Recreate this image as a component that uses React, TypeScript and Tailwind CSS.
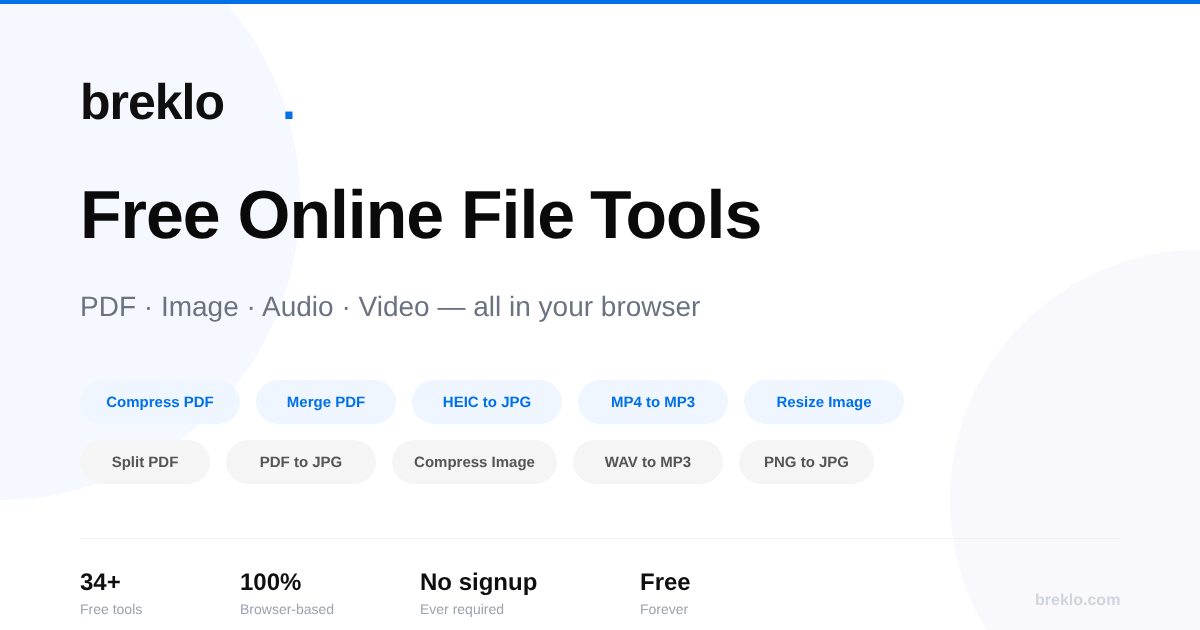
const blue = [
  { t: "Compress PDF", w: "w-[160px]" },
  { t: "Merge PDF", w: "w-[140px]" },
  { t: "HEIC to JPG", w: "w-[150px]" },
  { t: "MP4 to MP3", w: "w-[150px]" },
  { t: "Resize Image", w: "w-[160px]" },
];
const gray = [
  { t: "Split PDF", w: "w-[130px]" },
  { t: "PDF to JPG", w: "w-[150px]" },
  { t: "Compress Image", w: "w-[165px]" },
  { t: "WAV to MP3", w: "w-[150px]" },
  { t: "PNG to JPG", w: "w-[135px]" },
];
const stats = [
  { v: "34+", l: "Free tools", w: "w-[160px]" },
  { v: "100%", l: "Browser-based", w: "w-[180px]" },
  { v: "No signup", l: "Ever required", w: "w-[220px]" },
  { v: "Free", l: "Forever", w: "w-[160px]" },
];

export default function App() {
  return (
    <div className="relative h-[630px] w-[1200px] overflow-hidden bg-white font-['Liberation_Sans',Arial,sans-serif] [text-rendering:geometricPrecision]">
      <div className="absolute left-[-300px] top-[-100px] h-[600px] w-[600px] rounded-full bg-[#f5f9ff]" />
      <div className="absolute left-[950px] top-[250px] h-[500px] w-[500px] rounded-full bg-[#f8f8fd]" />
      <div className="relative flex h-full flex-col [will-change:transform]">
        <div className="h-1 bg-[#0071e9]" />
        <div className="flex flex-col px-20">
          <div className="mt-[68px] flex h-[60px] items-center text-[50px] font-bold leading-[60px] tracking-[-1px] text-[#0f0f0f]">
            <span className="w-[202px]">breklo</span>
            <span className="text-[#0071e9]">.</span>
          </div>
          <h1 className="mt-[40px] h-[86px] text-[68px] font-bold leading-[86px] tracking-[-1px] text-[#0a0a0a]">
            Free Online File <span className="ml-[-2px]">Tools</span>
          </h1>
          <p className="mt-[31px] h-[36px] text-[28px] leading-[36px] text-[#6b7280]">
            PDF · Image · Audio · Video — all in your browser
          </p>
          <div className="mt-[55px] flex gap-4">
            {blue.map((c) => (
              <div key={c.t} className={`flex h-11 items-center justify-center rounded-full bg-[#eff6ff] pt-[3px] text-[15px] font-bold text-[#0071e9] ${c.w}`}>
                {c.t}
              </div>
            ))}
          </div>
          <div className="mt-4 flex gap-4">
            {gray.map((c) => (
              <div key={c.t} className={`flex h-11 items-center justify-center rounded-full bg-[#f5f5f5] pt-[3px] text-[15px] font-bold text-[#555555] ${c.w}`}>
                {c.t}
              </div>
            ))}
          </div>
          <div className="mt-[54px] h-px bg-[#f2f2f4]" />
          <div className="mt-[29px] flex">
            {stats.map((s) => (
              <div key={s.v} className={s.w}>
                <div className="text-2xl font-bold leading-[30px] text-[#0f0f0f]">{s.v}</div>
                <div className="mt-[3px] text-sm leading-[16px] text-[#9ca3af]">{s.l}</div>
              </div>
            ))}
          </div>
        </div>
      </div>
      <div className="absolute right-20 top-[592px] text-base font-bold leading-[18px] text-[#d1d5db] [will-change:transform]">breklo.com</div>
    </div>
  );
}
